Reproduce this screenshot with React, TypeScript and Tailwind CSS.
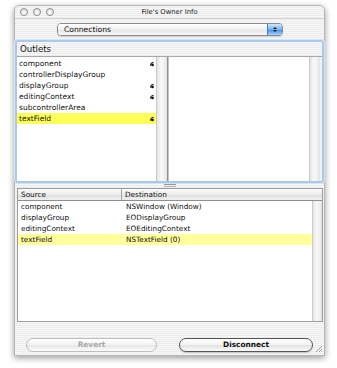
import React from "react"

const outlets = [
  { name: "component", linked: true },
  { name: "controllerDisplayGroup", linked: false },
  { name: "displayGroup", linked: true },
  { name: "editingContext", linked: true },
  { name: "subcontrollerArea", linked: false },
  { name: "textField", linked: true, selected: true },
]

const connections = [
  { source: "component", dest: "NSWindow (Window)" },
  { source: "displayGroup", dest: "EODisplayGroup" },
  { source: "editingContext", dest: "EOEditingContext" },
  { source: "textField", dest: "NSTextField (0)", selected: true },
]

const stripes = "bg-[repeating-linear-gradient(180deg,#f7f7f7_0px,#f7f7f7_1px,#ececec_1px,#ececec_2px)]"

function OutletDot() {
  return (
    <svg width="6" height="6" viewBox="0 0 6 6" className="shrink-0">
      <path d="M1.4 4.6 Q1.3 1.4 4.6 1.2" fill="none" stroke="#111" strokeWidth="1" />
      <circle cx="3.5" cy="3.9" r="1.4" fill="#111" />
    </svg>
  )
}

function Gutter({ className = "" }: { className?: string }) {
  return (
    <div
      className={`border-l border-[#cacaca] bg-[linear-gradient(90deg,#e4e4e4,#f8f8f8_40%,#f1f1f1_70%,#e2e2e2)] ${className}`}
    />
  )
}

function Light() {
  return (
    <div className="w-[8px] h-[8px] rounded-full border border-[#8c8c8c] bg-[radial-gradient(circle_at_50%_70%,#ffffff,#d8d8d8)]" />
  )
}

export default function App() {
  return (
    <div
      className="w-[337px] h-[368px] bg-white pt-[5px] pl-[14px] text-[#111]"
      style={{ fontFamily: '"DejaVu Sans", "Liberation Sans", sans-serif' }}
    >
      <div
        className={`relative w-[311px] h-[351px] rounded-t-[5px] flex flex-col ${stripes} shadow-[0_2px_6px_rgba(0,0,0,0.4)] border border-[#b5b5b5]`}
      >
        {/* title bar */}
        <div className="h-[13px] flex items-center border-b border-[#d2d2d2]">
          <div className="flex items-center gap-[5px] pl-[5px] w-[50px]">
            <Light />
            <Light />
            <Light />
          </div>
          <div className="flex-1 text-center text-[6.8px] text-[#222] leading-none">File's Owner Info</div>
          <div className="w-[50px]" />
        </div>

        {/* popup */}
        <div className="mt-[4px] ml-[42px] w-[226px] h-[13px] flex rounded-[4px] border border-[#8a8a8a] shadow-[0_1px_1px_rgba(0,0,0,0.15)] overflow-hidden">
          <div className="flex-1 flex items-center pl-[6px] text-[7.6px] leading-none bg-[linear-gradient(180deg,#ffffff,#f0f0f0_50%,#e2e2e2_51%,#fafafa)]">
            Connections
          </div>
          <div className="w-[15px] flex flex-col items-center justify-center gap-[1px] border-l border-[#4a7fc1] bg-[linear-gradient(180deg,#cfe6ff,#77b1f0_50%,#3d8be6_51%,#a9d3ff)]">
            <div className="w-0 h-0 border-l-[2px] border-r-[2px] border-b-[2px] border-l-transparent border-r-transparent border-b-[#1a1a1a]" />
            <div className="w-0 h-0 border-l-[2px] border-r-[2px] border-t-[2px] border-l-transparent border-r-transparent border-t-[#1a1a1a]" />
          </div>
        </div>

        {/* outlets group */}
        <div className="mt-[4px] w-[309px] h-[143px] flex flex-col rounded-[3px] border-2 border-[#a9c9ec] shadow-[0_0_0_1px_#d3e4f6]">
          <div className="h-[15px] flex items-center pl-[3px] text-[8.6px] leading-none border-b border-[#a8a8a8]">
            Outlets
          </div>
          <div className="flex-1 flex">
            <div className="w-[139px] bg-white pt-[1px]">
              {outlets.map((o) => (
                <div
                  key={o.name}
                  className={`h-[11px] flex items-center justify-between pl-[2px] pr-[1px] text-[7.5px] leading-none ${
                    o.selected ? "bg-[#ffff5a]" : ""
                  }`}
                >
                  <span>{o.name}</span>
                  {o.linked && <OutletDot />}
                </div>
              ))}
            </div>
            <Gutter className="w-[11px]" />
            <div className="w-[2px] bg-[#c4c4c4] border-l border-[#8f8f8f]" />
            <div className="w-[140px] bg-white" />
            <Gutter className="w-[11px]" />
          </div>
        </div>

        {/* splitter */}
        <div className="h-[5px] flex items-center justify-center">
          <div className="w-[12px] flex flex-col gap-[1px]">
            <div className="h-px bg-[#9a9a9a]" />
            <div className="h-px bg-[#b8b8b8]" />
          </div>
        </div>

        {/* connections table */}
        <div className="ml-[2px] w-[306px] h-[134px] flex flex-col border border-[#9c9c9c] bg-white">
          <div className="h-[12px] flex text-[7.3px] leading-none border-b border-[#8e8e8e] bg-[linear-gradient(180deg,#fbfbfb,#ececec_50%,#dedede_51%,#f0f0f0)]">
            <div className="w-[104px] flex items-center pl-[3px] border-r border-[#a5a5a5]">Source</div>
            <div className="flex-1 flex items-center pl-[3px]">Destination</div>
          </div>
          <div className="flex-1 flex">
            <div className="w-[294px]">
              {connections.map((c) => (
                <div
                  key={c.source}
                  className={`h-[11px] flex items-center text-[7.3px] leading-none ${c.selected ? "bg-[#ffff9c]" : ""}`}
                >
                  <span className="w-[105px] pl-[3px]">{c.source}</span>
                  <span className="pl-[3px]">{c.dest}</span>
                </div>
              ))}
            </div>
            <Gutter className="w-[10px]" />
          </div>
        </div>

        {/* buttons */}
        <div className="mt-[16px] h-[14px] flex">
          <button className="ml-[11px] w-[131px] h-[14px] rounded-full border border-[#bdbdbd] bg-[linear-gradient(180deg,#ffffff,#f2f2f2_50%,#e6e6e6_51%,#fbfbfb)] text-[7.4px] font-bold text-[#a9a9a9] leading-none">
            Revert
          </button>
          <button className="ml-[22px] w-[134px] h-[14px] rounded-full border border-[#555555] bg-[linear-gradient(180deg,#ffffff,#f2f2f2_50%,#e2e2e2_51%,#fafafa)] text-[7.4px] font-bold text-[#111] leading-none shadow-[0_1px_1px_rgba(0,0,0,0.2)]">
            Disconnect
          </button>
        </div>

        {/* resize grip */}
        <svg width="8" height="8" viewBox="0 0 8 8" className="absolute right-[1px] bottom-[2px]">
          <path d="M7 1 L1 7 M7 4 L4 7 M7 6.5 L6.5 7" stroke="#8a8a8a" strokeWidth="0.8" />
        </svg>
      </div>
    </div>
  )
}
